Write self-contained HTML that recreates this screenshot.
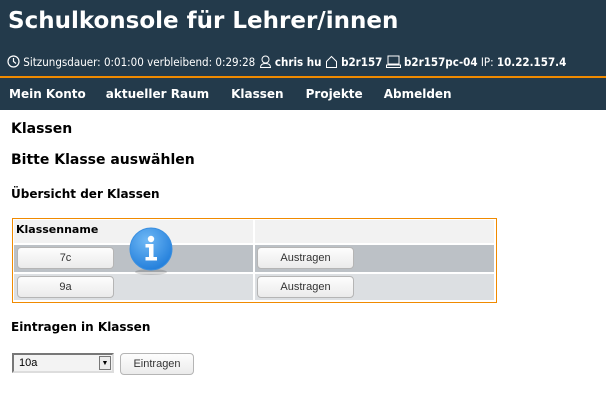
<!DOCTYPE html>
<html><head><meta charset="utf-8"><style>
*{margin:0;padding:0;box-sizing:border-box}
body{width:606px;height:404px;background:#fff;font-family:"DejaVu Sans","Liberation Sans",sans-serif;position:relative;overflow:hidden;color:#000}
.a{position:absolute;white-space:nowrap}
#hd{position:absolute;left:0;top:0;width:606px;height:110px;background:#233a4b}
#ol{position:absolute;left:0;top:76px;width:606px;height:2px;background:#f08a00}
.btn{position:absolute;background:linear-gradient(#fdfdfd,#ebebeb);border:1px solid #b5b5b5;border-radius:4px;font:11px "Liberation Sans",sans-serif;color:#333;text-align:center;line-height:20px;height:22px}
.cell{position:absolute}
</style></head><body>
<div id="hd"></div><div id="ol"></div>
<div class="a" style="left:8px;top:8px;font:bold 23px 'DejaVu Sans',sans-serif;color:#fff">Schulkonsole für Lehrer/innen</div>
<div class="a" style="left:7px;top:55px;font-size:11.5px;color:#fff;font-family:'DejaVu Sans Condensed','DejaVu Sans',sans-serif">
<svg width="13" height="13" viewBox="0 0 13 13" style="vertical-align:-2px"><circle cx="6.5" cy="6.5" r="5.5" fill="none" stroke="#fff" stroke-width="1.2"/><path d="M6.5 3v3.5l2.5 2" fill="none" stroke="#fff" stroke-width="1.2"/></svg>
Sitzungsdauer: 0:01:00 verbleibend: 0:29:28
<svg width="13" height="13" viewBox="0 0 13 13" style="vertical-align:-2px"><circle cx="6.5" cy="4.5" r="3.5" fill="none" stroke="#fff"/><path d="M1.5 12.5c0-3 2-4 5-4s5 1 5 4z" fill="none" stroke="#fff"/></svg>
<b>chris hu</b>
<svg width="13" height="13" viewBox="0 0 13 13" style="vertical-align:-2px"><path d="M1.5 12.5v-6l5-5 5 5v6z" fill="none" stroke="#fff"/></svg>
<b>b2r157</b>
<svg width="15" height="13" viewBox="0 0 15 13" style="vertical-align:-2px"><rect x="2" y="1" width="11" height="8" fill="none" stroke="#fff"/><rect x="0.5" y="10" width="14" height="2.5" fill="none" stroke="#fff"/></svg>
<b>b2r157pc-04</b> IP: <b>10.22.157.4</b></div>
<div class="a" style="left:9px;top:87px;font-size:12px;font-weight:bold;color:#fff">
<span>Mein Konto</span><span style="margin-left:20px">aktueller Raum</span><span style="margin-left:22px">Klassen</span><span style="margin-left:22px">Projekte</span><span style="margin-left:21px">Abmelden</span></div>
<div class="a" style="left:11px;top:121px;font-size:14px;font-weight:bold">Klassen</div>
<div class="a" style="left:11px;top:152px;font-size:14px;font-weight:bold">Bitte Klasse auswählen</div>
<div class="a" style="left:11px;top:187px;font-size:12px;font-weight:bold">Übersicht der Klassen</div>
<div class="cell" style="left:12px;top:218px;width:485px;height:85px;border:1px solid #f08a00;background:#fff"></div>
<div class="cell" style="left:14px;top:220px;width:239px;height:23px;background:#f2f2f2"></div>
<div class="cell" style="left:255px;top:220px;width:239px;height:23px;background:#f2f2f2"></div>
<div class="cell" style="left:14px;top:245px;width:239px;height:27px;background:#bcc1c6"></div>
<div class="cell" style="left:255px;top:245px;width:239px;height:27px;background:#bcc1c6"></div>
<div class="cell" style="left:14px;top:274px;width:239px;height:26px;background:#dcdfe2"></div>
<div class="cell" style="left:255px;top:274px;width:239px;height:26px;background:#dcdfe2"></div>
<div class="a" style="left:16px;top:223px;font-size:11px;font-weight:bold">Klassenname</div>
<div class="btn" style="left:17px;top:247px;width:97px">7c</div>
<div class="btn" style="left:17px;top:276px;width:97px">9a</div>
<div class="btn" style="left:257px;top:247px;width:97px">Austragen</div>
<div class="btn" style="left:257px;top:276px;width:97px">Austragen</div>
<svg class="a" style="left:127px;top:227px" width="48" height="50" viewBox="0 0 48 50"><ellipse cx="24" cy="45" rx="16" ry="3" fill="#000" opacity=".15"/><defs><radialGradient id="g" cx=".4" cy=".3" r=".8"><stop offset="0" stop-color="#6fb8f5"/><stop offset="1" stop-color="#1a78d8"/></radialGradient></defs><circle cx="24" cy="22" r="21" fill="url(#g)" stroke="#3a8fe0"/><circle cx="24" cy="12" r="3.2" fill="#fff"/><path d="M18.5 17h8v13h3.5v3.5H18.5V30h3.5v-9.5h-3.5z" fill="#fff"/></svg>
<div class="a" style="left:11px;top:320px;font-size:12px;font-weight:bold">Eintragen in Klassen</div>
<div class="a" style="left:12px;top:353px;width:102px;height:20px;border:2px solid #777;border-right-color:#ddd;border-bottom-color:#ddd;background:#f3f3f3;font:11px 'Liberation Sans',sans-serif;line-height:16px;padding-left:5px">10a<span style="position:absolute;right:1px;top:1px;width:12px;height:14px;background:#ececec;border:1px solid #777;font-size:7px;line-height:13px;text-align:center">▼</span></div>
<div class="btn" style="left:120px;top:353px;width:74px">Eintragen</div>
</body></html>
